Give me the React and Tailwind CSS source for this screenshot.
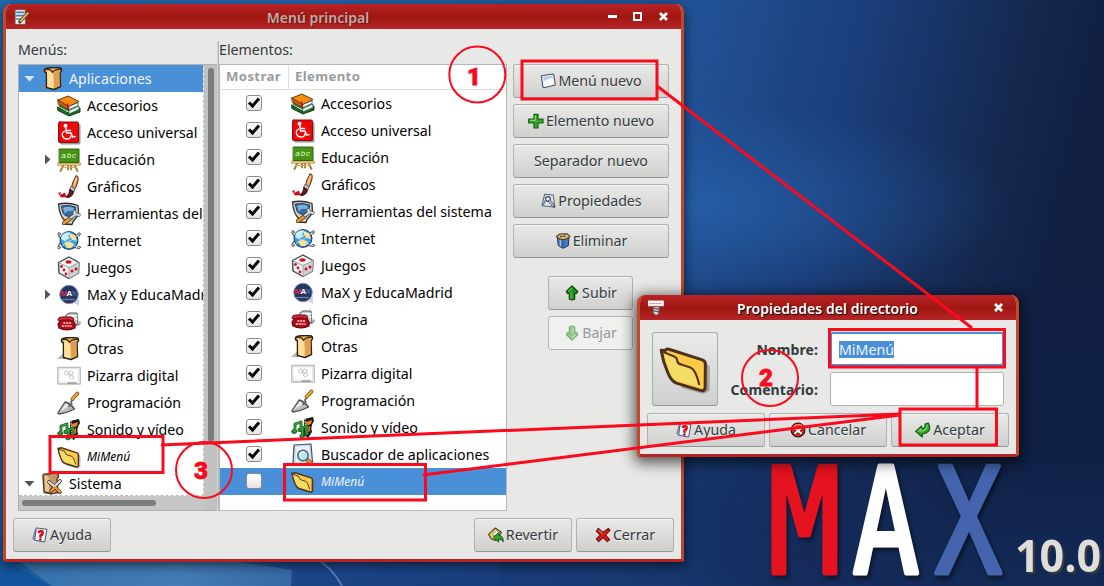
import React from "react";

const RED = "#fb0a1e";

function Svg({ size = 24, children, className = "" }) {
  return (
    <svg width={size} height={size} viewBox="0 0 24 24" className={`shrink-0 ${className}`} strokeLinejoin="round" strokeLinecap="round">
      {children}
    </svg>
  );
}

const Box = () => (
  <Svg>
    <path d="M0 22 L8 15 V22 Z" fill="#8b8b86" opacity="0.65" />
    <path d="M6.500 6 C3.500 5 4 2 6 1.500 Q13 -0.200 20.500 1 Q22.800 3 20 6 L20.500 19.500 L14 22.500 L6.500 20.500 Z" fill="#f0b55e" stroke="#2c2013" strokeWidth="1.500" />
    <path d="M7 5 Q10 2.500 12 5 L13.500 6.500 V21.500 L7.300 19.800 Z" fill="#ffdf9c" />
    <path d="M13.500 7 Q14 4 19.500 4 L19.800 19 L14.500 21.500 Z" fill="#dc9e50" />
    <path d="M5.500 2.700 Q10 1 12.500 5.500 Q15 2 20.500 2.500" fill="none" stroke="#3f2a13" strokeWidth="1.200" />
  </Svg>
);
const Books = () => (
  <Svg>
    <path d="M1 13 L11 19 L23 14 V18 L12 22 L1 16.500 Z" fill="#1b6b25" stroke="#123c17" />
    <path d="M12 16.500 L22 12 V15.500 L12 20 Z" fill="#f2f6f2" stroke="#19572a" strokeWidth="0.800" />
    <path d="M2 9 L12 14.500 V18 L2 12.500 Z" fill="#168b2f" />
    <path d="M1 6 L11 2 L22 7.500 L12 12.500 Z" fill="#fb8b10" stroke="#5b3510" />
    <path d="M1 6 L12 12.500 V16 L1.500 10.500 Z" fill="#c75a13" stroke="#5b3510" strokeWidth="0.800" />
    <path d="M12 12.500 L21 8.500 V11.500 L12 15.500 Z" fill="#fff" stroke="#31413a" strokeWidth="0.800" />
    <path d="M10.700 10 V15" stroke="#d50d1c" strokeWidth="1.400" />
  </Svg>
);
const Access = () => (
  <Svg>
    <rect x="3" y="3" width="20.500" height="20.500" rx="1.500" fill="#777" opacity="0.750" />
    <rect x="1.500" y="1" width="20" height="20.500" rx="1.300" fill="#ef0707" stroke="#8a1010" />
    <circle cx="8.500" cy="4.700" r="2" fill="#fff" />
    <path d="M9 7 L9.500 12 H14 L15.500 16 L18 15.500 M10 9.500 H13.500" fill="none" stroke="#fff" strokeWidth="1.600" />
    <path d="M7.500 10 C3.500 12.500 5.500 18 10 18 C12.500 18 14 16.500 14 14.500" fill="none" stroke="#fff" strokeWidth="1.300" />
  </Svg>
);
const Board = () => (
  <Svg>
    <path d="M7 16 L3.500 23 M17 16 L20.500 23 M11 16 V21.500 M14 16 V21.500" stroke="#b27b2e" strokeWidth="1.900" />
    <rect x="0.500" y="15" width="23" height="2.300" fill="#f0ca85" stroke="#a77832" strokeWidth="0.600" />
    <path d="M5 19.500 H19" stroke="#dca951" />
    <rect x="2.500" y="1" width="19.500" height="13.500" fill="#469413" stroke="#2a6413" strokeWidth="1" />
    <text x="4.200" y="10" fontSize="8" fontStyle="italic" fill="#e9ffd6" fontFamily="Liberation Sans, sans-serif" letterSpacing="1">abc</text>
  </Svg>
);
const Brush = () => (
  <Svg>
    <path d="M1 18 L4 17 L3 20 L8 17.500 L9 21 L13 18 L12 22 L4 22.500 Z" fill="#c60d22" />
    <path d="M19 1 Q22 0 21 6 Q19.500 12 17.500 14.500 L14.500 12.500 Q15.500 6 19 1 Z" fill="#e6a15e" stroke="#5a3016" />
    <path d="M14.200 11.500 L18 14 L16.800 17 L13 15 Z" fill="#c9d2d5" stroke="#454a4c" strokeWidth="0.800" />
    <path d="M13 14.500 L16.500 16.500 Q16 22.500 9.500 22.500 Q12 20 13 14.500 Z" fill="#5c1c1b" stroke="#401213" />
    <path d="M19.500 3 L17 10" stroke="#ffdca5" />
  </Svg>
);
const Tools = () => (
  <Svg>
    <path d="M1.500 2 Q11 0 21 3.500 L21.500 13 L16 19.500 L15 22.500 L6 22 L7.500 18 Q2.500 14 1.500 2 Z" fill="#d8d3c4" stroke="#302e2b" strokeWidth="1.300" />
    <path d="M4.500 4 Q12 2.500 18.500 5 L18 12 Q11 17 6.500 12 Z" fill="#346ca7" stroke="#223e64" />
    <path d="M6 6 Q11 3.500 17 6 L16 9 Q9 8 8 12 Z" fill="#79b1dc" />
    <path d="M7 21 L14 16" stroke="#603b15" strokeWidth="4" />
    <path d="M7 21 L14 16" stroke="#ef9e36" strokeWidth="2.700" />
    <path d="M14 15.500 L19 12 M17.500 9.500 V12 L22 13" stroke="#4d5556" strokeWidth="3.400" fill="none" />
    <path d="M14 15.500 L19 12 M17.500 9.500 V12 L22 13" stroke="#d7dedf" strokeWidth="2.100" fill="none" />
  </Svg>
);
const Globe = () => (
  <Svg>
    <path d="M2 19 Q-1 14 12 10 Q23 3 22 7 M2 4 Q-1 8 11 14 Q22 22 23 18" fill="none" stroke="#5d6264" strokeWidth="1.200" />
    <circle cx="12" cy="11.500" r="8.800" fill="#40a4df" stroke="#1b4a72" strokeWidth="1.300" />
    <path d="M5 6 Q9 2 14 4 L11 7 L13 9 L8 12 L4 10 Z" fill="#c7edf8" />
    <path d="M13 4.500 L18 6 L20 12 L16 11 L13 8 Z M7 14 L13 13 L17 15 L14 19 L10 19 Z" fill="#ffe18b" />
    <path d="M3 5 Q3 9 10 13 Q17 17 21 19 M4 18 Q7 14 13 12 Q20 9 21 5" fill="none" stroke="#e3e6e6" strokeWidth="0.700" />
    <circle cx="2" cy="5" r="1.300" fill="#fff" stroke="#444" strokeWidth="0.800" />
    <circle cx="22" cy="5" r="1.300" fill="#fff" stroke="#444" strokeWidth="0.800" />
    <circle cx="2" cy="18.500" r="1.300" fill="#fff" stroke="#444" strokeWidth="0.800" />
    <circle cx="22" cy="18.500" r="1.300" fill="#fff" stroke="#444" strokeWidth="0.800" />
  </Svg>
);
const Dice = () => (
  <Svg>
    <path d="M12 1 L22 6.500 L21.500 17 L12 22.500 L2 17 L1.500 6.500 Z" fill="#f2f4f4" stroke="#3b484d" strokeWidth="1.400" />
    <path d="M12 11.500 L22 6.500 L21.500 17 L12 22.500 Z" fill="#ccd2d5" />
    <path d="M2 6.800 L12 11.500 V22 M12 11.500 L21.500 6.800" stroke="#99a5aa" fill="none" />
    <ellipse cx="11.500" cy="6" rx="3" ry="1.700" fill="#d30f15" />
    <g fill="#d30f15"><circle cx="4.500" cy="10.500" r="1.400" /><circle cx="7" cy="14" r="1.400" /><circle cx="9" cy="18" r="1.400" /><circle cx="15" cy="15" r="1.500" /><circle cx="19" cy="13" r="1.500" /></g>
  </Svg>
);
const Max = () => (
  <Svg>
    <path d="M15 19 L22 23 V15 Z" fill="#ccd4e3" />
    <circle cx="12" cy="11.500" r="9.300" fill="#25355f" stroke="#8290ae" strokeWidth="0.900" />
    <g fontFamily="Liberation Sans, sans-serif" fontSize="8" fontWeight="bold"><text x="3.500" y="13" fill="#de2943">M</text><text x="9.400" y="13" fill="#fff">A</text><text x="14.500" y="13" fill="#496caf">X</text></g>
    <path d="M6 16.500 H18" stroke="#7687aa" strokeWidth="1.500" strokeDasharray="1 1.500" />
  </Svg>
);
const Phone = () => (
  <Svg>
    <path d="M9 5 L12 3 H20 L21 14 L17 17 L9 13 Z" fill="#c9cdcd" stroke="#53595a" />
    <path d="M11 6 H20 M11 9 H20" stroke="#fff" strokeWidth="1.300" />
    <path d="M18 15 Q24 16 23 12" fill="none" stroke="#555" />
    <path d="M1 14 L5 8 H15 L18 14 V18 Q10 22 2 18 Z" fill="#b80b18" stroke="#4d0a0f" strokeWidth="1.100" />
    <path d="M1 10 Q1 7 5 7 H14 Q17 8 17 10 Q15 12 13 10 H5 Q2 12 1 10" fill="#ea2b35" stroke="#5c0b10" />
    <path d="M7 13 H14 M5.500 16 H14" stroke="#ffe8e4" strokeWidth="1.500" strokeDasharray="0.800 2" />
  </Svg>
);
const Screen = () => (
  <Svg>
    <rect x="0.800" y="3.500" width="22.500" height="16.500" fill="#f9faf9" stroke="#b9bcba" strokeWidth="1.300" />
    <rect x="2.500" y="5" width="19" height="13" fill="#fff" stroke="#d9dbda" strokeWidth="0.600" />
    <g fill="none" stroke="#b5b5b5" strokeWidth="0.700"><circle cx="9.500" cy="9" r="2" /><circle cx="14" cy="9" r="2" /><circle cx="14.500" cy="13" r="2" /><path d="M11 10 L13 12.500" /></g>
    <path d="M11 19 H19" stroke="#777" strokeWidth="1.200" />
  </Svg>
);
const Trowel = () => (
  <Svg>
    <path d="M0.800 22 L8 11 Q13 12 17.500 18 Q10 22 2 23 Z" fill="#bdbdbf" stroke="#4e4e52" strokeWidth="1.300" />
    <path d="M3 20.500 L9 12.500 L12 15 Z" fill="#eeeef0" />
    <path d="M12 15 Q16 15 14 11 L16 8.500" fill="none" stroke="#64686b" strokeWidth="1.800" />
    <path d="M15.500 8 L20.500 2.500" stroke="#6d4510" strokeWidth="3.600" />
    <path d="M15.500 8 L20.500 2.500" stroke="#efa71d" strokeWidth="2.400" />
  </Svg>
);
const Media = () => (
  <Svg>
    <path d="M13 3 L22 1 L23 5 Q19 11 21 16 L17 22 L13 20 Z" fill="#1e1914" />
    <path d="M15 6 L21 4 L20 8 L15 10 Z M15 12 L19 10 L19 15 L15 18 Z" fill="#f27f22" />
    <path d="M14 3 L15 21" stroke="#fff" strokeDasharray="1 1.500" />
    <path d="M4 15 V8 L10 6 V13 M11.500 19 V12 L16 10 V17" fill="none" stroke="#0d501b" strokeWidth="2.800" />
    <g fill="#26992d" stroke="#0d501b" strokeWidth="0.900"><ellipse cx="3.200" cy="15.500" rx="2.500" ry="2" /><ellipse cx="9" cy="14" rx="2.200" ry="1.800" /><ellipse cx="11" cy="20" rx="2.200" ry="1.800" /><ellipse cx="15.500" cy="17.500" rx="2" ry="1.700" /></g>
    <path d="M4 15 V8 L10 6 V13 M11.500 19 V12 L16 10 V16" fill="none" stroke="#36aa38" strokeWidth="1.400" />
  </Svg>
);
const Folder = ({ size = 24 }) => (
  <Svg size={size}>
    <path d="M10 20.500 L20.500 23.500 L23.300 22 L23.500 11 L21 8.500 Z" fill="#6b6b6b" opacity="0.500" />
    <path d="M1 3.300 L2.800 3.500 Q3.500 2.400 5 3 L20 7.800 Q21.500 8.300 21.400 10 L21.300 20.800 Q21 22.300 19.500 22 L8 18.500 Q5.500 17.500 4 13.500 Q1.800 8.500 1 3.300 Z" fill="#ffca44" stroke="#4d311d" strokeWidth="1.400" />
    <path d="M2 4.200 L7 6.200 Q8.400 6.800 8.400 8.200 Q8.600 9.700 10.500 10 L14.500 11.300 Q17 12.300 19 20.500 L8 17.300 Q6 16.500 4.700 13 Q3 8.500 2 4.200 Z" fill="#f5dc67" />
    <path d="M2 4.200 L7 6.200 Q8.400 6.800 8.400 8.200 Q8.600 9.700 10.500 10 L14.500 11.300 Q17 12.300 18.500 19" fill="none" stroke="#56381f" strokeWidth="1" />
  </Svg>
);
const Finder = () => (
  <Svg>
    <path d="M3 2 L20 1 L21.500 19 L5 22 L2 20 Z" fill="#cedeed" stroke="#44505f" strokeWidth="1.200" />
    <path d="M5 4 L18 3 L19 17 L5 19 Z" fill="#eaf2f9" />
    <path d="M16 16 L20 20.500" stroke="#6e4410" strokeWidth="3.600" /><path d="M16.500 16.500 L20 20.500" stroke="#f3951c" strokeWidth="2.300" />
    <circle cx="12" cy="12.500" r="5.200" fill="#b9e8f7" stroke="#476076" strokeWidth="1.500" />
    <path d="M9 12 Q9 9.500 12 9" fill="none" stroke="#fff" strokeWidth="1.500" />
  </Svg>
);
const SystemBox = () => (
  <Svg>
    <path d="M0 22 H21 V20 Z" fill="#999" />
    <path d="M3 5 Q2 1 7 2 L17 1 Q20 4 17 7 L18 20 L12 22 L4 20 Z" fill="#c49661" stroke="#483320" strokeWidth="1.300" />
    <path d="M5 4 Q8 3 9 7 V20 L5 19 Z" fill="#e7c697" />
    <path d="M9 10 L20 20 M20 9 L11 19" stroke="#3b342d" strokeWidth="3.700" />
    <path d="M9 10 L15 15 M20 9 L15 14" stroke="#dee3e4" strokeWidth="2.200" />
    <path d="M15.500 15.500 L20 20 M15 15 L11 19" stroke="#ed982e" strokeWidth="2.400" />
  </Svg>
);

const Paper = () => (
  <Svg size={16}>
    <path d="M2 4 L19 1.500 Q21 1.500 21 4 L23 18 L6 22 Q4 22 4 19 Z" fill="#e7eff8" stroke="#46546b" strokeWidth="1.600" />
    <path d="M5 5.500 L19 4 V8 Q14 6 6 12 Z" fill="#bdcce0" /><path d="M6 14 Q13 8 20 9 L21 17 L7 20 Z" fill="#fff" />
  </Svg>
);
const Plus = () => (
  <Svg size={16}><path d="M9 2 H15 V9 H22.500 V15 H15 V22.500 H9 V15 H1 V9 H9 Z" fill="#38a727" stroke="#145e12" strokeWidth="1.800" /><path d="M11 4 V11 H4" fill="none" stroke="#9be07f" strokeWidth="1.500" /></Svg>
);
const Props = () => (
  <Svg size={16}><path d="M7 2 L20 3 L22 21 L3 19 Z" fill="#dfe6ef" stroke="#53627b" strokeWidth="1.600" /><circle cx="12" cy="9" r="3.500" fill="#fff" stroke="#39434e" strokeWidth="1.800" /><path d="M14 12 L21 20" stroke="#444d55" strokeWidth="4" /><path d="M14 12 L20 19" stroke="#d4dce0" strokeWidth="1.800" /><path d="M5 18 L8 11" stroke="#5c7eaa" strokeWidth="2" /></Svg>
);
const Trash = () => (
  <Svg size={16}><path d="M3.500 7 L5 19 L12 23 L20 19 L21 7 Z" fill="#4b76b5" stroke="#20375d" strokeWidth="1.500" /><path d="M8 11 V19" stroke="#9dbbe2" strokeWidth="2" /><path d="M12 12 V21.500" stroke="#2c4d82" strokeWidth="1.500" /><path d="M2 5 L7 1.500 L18 1 L22.500 5 L18 8.500 L12 10 L6 8.500 Z" fill="#e0bd70" stroke="#413822" strokeWidth="1.600" /><path d="M8 5.500 L16 4.500" stroke="#423b24" strokeWidth="2" strokeDasharray="2 3" /></Svg>
);
const Up = () => (
  <Svg size={16}><path d="M12 1.500 L20.500 9.500 L19 12.500 H16 V21 Q12 24 8 21 V12.500 H5 L3.500 9.500 Z" fill="#18931c" stroke="#083f0b" strokeWidth="1.800" /><path d="M7 9 L12 4.500 M10.500 11 V20" stroke="#66c555" strokeWidth="1.700" /></Svg>
);
const Down = () => (
  <Svg size={16} className="rotate-180 opacity-50"><path d="M12 1.500 L20.500 9.500 L19 12.500 H16 V21 Q12 24 8 21 V12.500 H5 L3.500 9.500 Z" fill="#31a62a" stroke="#166319" strokeWidth="1.800" /><path d="M7 9 L12 4.500 M10.500 11 V20" stroke="#93d883" strokeWidth="1.700" /></Svg>
);
const Help = () => (
  <Svg size={16}><path d="M1.500 17 L5 4 L9 4 V20 Z" fill="#b9c6d8" stroke="#61728d" strokeWidth="1.500" /><path d="M7 1.500 L22.500 3.500 L19 22.500 L4.500 20 Z" fill="#edf2f8" stroke="#485875" strokeWidth="1.500" /><path d="M10.500 7 Q16.500 4.500 16 9 Q15.500 12 12.800 12.500 V14.500" fill="none" stroke="#e10f17" strokeWidth="4" /><circle cx="12.500" cy="18.800" r="1.900" fill="#a5121a" /></Svg>
);
const Revert = () => (
  <Svg size={16}><path d="M1 11 L11 1.500 L20 8 L12 20 L5 18 Z" fill="#ecd477" stroke="#544315" strokeWidth="1.800" /><path d="M7 11 L13 5 L18 9 L13 14 Z" fill="#e2eef9" stroke="#8c7841" /><path d="M8 15.500 L16 8.500 V12 Q23 13 23 22 Q20 18 16 18 V22 Z" fill="#35a52a" stroke="#17591a" strokeWidth="1.500" /></Svg>
);
const Close = () => (
  <Svg size={16}><path d="M5 2 L12 8 L20 2 L22.500 5 L16 12 L22 19 L18.500 22 L12 16 L5.500 22 L2 18 L8 12 L2 6 Z" fill="#d91717" stroke="#711111" strokeWidth="1.600" /><path d="M5 4.500 L11 10" stroke="#ff8c7b" strokeWidth="1.500" /></Svg>
);
const Cancel = () => (
  <Svg size={16}><circle cx="12" cy="12" r="10.300" fill="#e0261b" stroke="#38110e" strokeWidth="1.800" /><path d="M5 7 Q11 2 18 5" stroke="#f98a65" strokeWidth="2" fill="none" /><path d="M7.500 9.500 L16.500 17 M16.500 9.500 L7.500 17" stroke="#4a100e" strokeWidth="4.800" /><path d="M7.500 9.500 L16.500 17 M16.500 9.500 L7.500 17" stroke="#fff" strokeWidth="3" /></Svg>
);
const Enter = () => (
  <Svg size={16}><path d="M1 14 L10 6 V10.500 Q16 9 15 3 L20 1.500 Q27 15 11 18 V22.500 Z" fill="#29a829" stroke="#115516" strokeWidth="1.700" /><path d="M5 14 L9 10 V14 Q17 13 18.500 5" fill="none" stroke="#8ed873" strokeWidth="1.600" /></Svg>
);

const categories = [
  ["Accesorios", Books], ["Acceso universal", Access], ["Educación", Board], ["Gráficos", Brush],
  ["Herramientas del sistema", Tools], ["Internet", Globe], ["Juegos", Dice], ["MaX y EducaMadrid", Max],
  ["Oficina", Phone], ["Otras", Box], ["Pizarra digital", Screen], ["Programación", Trowel], ["Sonido y vídeo", Media],
];

function Button({ icon: Icon, children, className = "", disabled = false }) {
  return (
    <div className={`flex h-[34px] shrink-0 items-center justify-center gap-[2px] rounded-[3px] border text-[14.200px] leading-none ${disabled ? "border-[#b4b4b2] bg-[#f0f0ef] text-[#999]" : "border-[#b1b1af] border-b-[#969694] bg-linear-to-b from-[#e9e9e7] to-[#d0d0ce] text-[#333b3e] [text-shadow:0_1px_0_#f4f4f4] shadow-[inset_0_1px_0_#f4f4f2]"} ${className}`}>
      {Icon && <Icon />}
      <span className="whitespace-nowrap">{children}</span>
    </div>
  );
}

function Arrow({ open, className }) {
  return (
    <svg width="11" height="11" viewBox="0 0 11 11" className={`shrink-0 ${className}`}>
      <path d={open ? "M0.500 3 H10.500 L5.500 8.500 Z" : "M3 0.500 V10.500 L8.500 5.500 Z"} fill="currentColor" />
    </svg>
  );
}

function Branch({ label, icon: Icon, expandable }) {
  return (
    <div className="flex h-[27px] shrink-0 items-center pl-[23px]">
      <span className="flex w-[15px] shrink-0">{expandable && <Arrow className="text-[#555]" />}</span>
      <Icon />
      <span className="ml-[6px] whitespace-nowrap">{label}</span>
    </div>
  );
}

function Check({ on }) {
  return (
    <span className="mb-px flex size-4 items-center justify-center rounded-[3px] border border-[#8b8b8a] bg-linear-to-b from-white to-[#e4e4e3]">
      {on && <svg width="14" height="14" viewBox="0 0 14 14"><path d="M2 6.500 L5.500 10 L12 2.500" fill="none" stroke="#080808" strokeWidth="3" /></svg>}
    </span>
  );
}

function ElementRow({ label, icon: Icon, selected }) {
  return (
    <div className={`flex h-[27px] shrink-0 items-center ${selected ? "bg-[#4a90d9] text-[#f0f4fa]" : ""}`}>
      <div className="flex w-[71px] pl-[26px]"><Check on={!selected} /></div>
      <Icon />
      <span className={`ml-[6px] whitespace-nowrap ${selected ? "text-[12px] italic" : ""}`}>{label}</span>
    </div>
  );
}

const X = () => (
  <svg width="11" height="11" viewBox="0 0 11 11"><path d="M2 2 L9 9 M9 2 L2 9" stroke="#fff" strokeWidth="2.800" /></svg>
);

function MainWindow() {
  return (
    <section className="absolute left-[3px] top-[4px] flex h-[558px] w-[681px] flex-col overflow-hidden rounded-t-[8px] rounded-b-[3px] border-x-[3px] border-b-[3px] border-x-[#c1482b] border-b-[#b72323] bg-[#e8e8e6] shadow-[0_3px_12px_#000000a0]">
      <header className="-mx-[3px] flex h-[25px] shrink-0 items-center bg-linear-to-b from-[#b92226] via-[#a01711] to-[#b52426] px-[11px]">
        <Svg size={16}>
          <path d="M2 1 H17 V23 H2 Z" fill="#f0f0eb" stroke="#665252" /><path d="M4 5 H15 M4 10 H15 M4 15 H11" stroke="#477fae" strokeWidth="2.500" /><path d="M9 19 L21 6" stroke="#40310f" strokeWidth="5" /><path d="M10 18 L21 6" stroke="#e2b052" strokeWidth="3" />
        </Svg>
        <h1 className="flex-1 pl-[2px] pr-[4px] pt-[2px] text-center text-[14px] font-semibold text-[#bcaba5] [text-shadow:1px_1px_0_#7b1712]">Menú principal</h1>
        <div className="flex items-center gap-[16px] pr-[4px]">
          <span className="h-[3px] w-[9px] bg-white" />
          <span className="size-[9px] border-2 border-white" />
          <X />
        </div>
      </header>
      <div className="flex h-[482px] shrink-0 pl-[12px] pr-[12px] text-[14.200px] text-black">
        <div className="flex w-[199px] flex-col">
          <h2 className="flex h-[35px] shrink-0 items-center pt-[7px] text-[#333b3e]">Menús:</h2>
          <div className="flex h-[447px] border border-r-0 border-[#b0b0ae]">
            <div className="flex w-[185px] flex-col">
              <div className="flex h-[431px] shrink-0 flex-col overflow-hidden border-r border-b border-dashed border-[#bebebe] bg-white">
                <div className="flex h-[27px] shrink-0 items-center bg-[#4a90d9] pl-[5px] text-[#f0f4fa]">
                  <Arrow open className="mr-[5px] text-[#d5e8fb]" /><Box /><span className="ml-[5px]">Aplicaciones</span>
                </div>
                {categories.map(([name, icon]) => <Branch key={name} label={name} icon={icon} expandable={name === "Educación" || name === "MaX y EducaMadrid"} />)}
                <div className="flex h-[27px] shrink-0 items-center pl-[38px]"><Folder /><span className="ml-[6px] text-[12px] italic">MiMenú</span></div>
                <div className="flex h-[27px] shrink-0 items-center pl-[5px]"><Arrow open className="mr-[5px] text-[#555]" /><SystemBox /><span className="ml-[5px]">Sistema</span></div>
              </div>
              <div className="flex flex-1 items-center bg-[#c5c6c5] pl-[3px]"><span className="h-[6px] w-[134px] rounded-full bg-[#797d7d]" /></div>
            </div>
            <div className="flex w-[13px] justify-center bg-[#c1c3c2] pt-[3px]"><span className="h-[374px] w-[6px] rounded-full bg-[#797d7d]" /></div>
          </div>
        </div>
        <div className="mt-[12px] h-[470px] w-[2px] border-r border-[#b7b7b4] bg-[#d2d3d1]" />
        <div className="flex w-[288px] flex-col">
          <h2 className="flex h-[35px] shrink-0 items-center pt-[7px] text-[#333b3e]">Elementos:</h2>
          <div className="flex h-[447px] flex-col border border-[#b7b7b4] bg-white">
            <div className="flex h-[25px] shrink-0 items-center border-b border-[#dededd] text-[13.200px] font-bold tracking-[0.35px] text-[#999b9c]">
              <span className="flex h-full w-[69px] items-center border-r border-[#dededd] pl-[6px]">Mostrar</span>
              <span className="pl-[6px]">Elemento</span>
            </div>
            {categories.map(([name, icon]) => <ElementRow key={name} label={name} icon={icon} />)}
            <ElementRow label="Buscador de aplicaciones" icon={Finder} />
            <ElementRow label="MiMenú" icon={Folder} selected />
          </div>
        </div>
        <div className="ml-[6px] mt-[35px] flex w-[156px] flex-col gap-[6px]">
          <Button icon={Paper}>Menú nuevo</Button>
          <Button icon={Plus}>Elemento nuevo</Button>
          <Button>Separador nuevo</Button>
          <Button icon={Props}>Propiedades</Button>
          <Button icon={Trash}>Eliminar</Button>
          <div className="mt-[12px] flex flex-col items-start gap-[6px] pl-[35px]">
            <Button icon={Up} className="w-[85px]">Subir</Button>
            <Button icon={Down} className="w-[85px]" disabled>Bajar</Button>
          </div>
        </div>
      </div>
      <footer className="flex items-center gap-[4px] pl-[7px] pr-[7px] pt-[7px]">
        <Button icon={Help} className="mr-auto w-[98px]">Ayuda</Button>
        <Button icon={Revert} className="w-[98px]">Revertir</Button>
        <Button icon={Close} className="w-[98px]">Cerrar</Button>
      </footer>
    </section>
  );
}

function Dialog() {
  return (
    <section className="absolute left-[637px] top-[295px] flex h-[162px] w-[382px] flex-col overflow-hidden rounded-t-[8px] rounded-b-[4px] border-x-[3px] border-b-[3px] border-x-[#c1482b] border-b-[#b72323] bg-[#e8e8e6] shadow-[0_3px_14px_3px_#000000a0]">
      <header className="-mx-[3px] flex h-[25px] shrink-0 items-center bg-linear-to-b from-[#b92226] via-[#a01711] to-[#b52426] px-[11px]">
        <Svg size={16}>
          <path d="M0 1 H24 V9 H0 Z" fill="#fff" stroke="#c8b5b2" /><path d="M3 5.500 H21" stroke="#b92a2a" strokeWidth="1.500" strokeDasharray="0.500 2.500" /><path d="M8 10 H17 L16 21 L12 23 L8 20 Z" fill="#d2d4d3" stroke="#554d4b" /><path d="M8 12 L17 14 M8 16 L17 18" stroke="#555" strokeWidth="1.700" />
        </Svg>
        <h1 className="flex-1 pt-[2px] pr-[2px] text-center text-[14px] font-semibold tracking-[0.050px] text-white [text-shadow:1px_1px_1px_#000]">Propiedades del directorio</h1>
        <span className="pr-[4px]"><X /></span>
      </header>
      <div className="flex h-[86px] shrink-0 pl-[12px] pr-[12px] pt-[12px]">
        <div className="flex h-[74px] w-[66px] shrink-0 items-center justify-center rounded-[3px] border border-[#aaa] border-b-[#969694] bg-linear-to-b from-[#eaeae8] to-[#d0d0ce]"><Folder size={52} /></div>
        <div className="flex w-[112px] flex-col gap-[6px] pr-[12px] text-right text-[14px] font-bold tracking-[0.100px] text-[#333b3e]">
          <label className="flex h-[34px] items-center justify-end pt-px">Nombre:</label>
          <label className="flex h-[34px] items-center justify-end pt-px">Comentario:</label>
        </div>
        <div className="flex flex-1 flex-col gap-[6px]">
          <div className="flex h-[34px] items-center rounded-[3px] border-2 border-[#4a90d9] bg-white pl-[7px] text-[14.200px]"><span className="bg-[#4a90d9] leading-[17px] text-[#f0f4fa]">MiMenú</span></div>
          <div className="h-[34px] rounded-[3px] border border-[#b1b1af] bg-white" />
        </div>
      </div>
      <footer className="flex gap-[4px] pl-[7px] pr-[7px] pt-[7px]">
        <Button icon={Help} className="w-[118px]">Ayuda</Button>
        <Button icon={Cancel} className="w-[118px]">Cancelar</Button>
        <Button icon={Enter} className="w-[118px]">Aceptar</Button>
      </footer>
    </section>
  );
}

function Wallpaper() {
  return (
    <svg width="1104" height="586" viewBox="0 0 1104 586" className="absolute inset-0">
      <defs>
        <linearGradient id="sky" x1="0" y1="0" x2="1" y2="0.120">
          <stop offset="0" stopColor="#1d6cae" /><stop offset="0.300" stopColor="#2564ab" /><stop offset="0.600" stopColor="#22559b" /><stop offset="0.780" stopColor="#1b3d7a" /><stop offset="0.920" stopColor="#15294f" /><stop offset="1" stopColor="#101f42" />
        </linearGradient>
        <radialGradient id="glow"><stop offset="0" stopColor="#2865ae" stopOpacity="0.650" /><stop offset="1" stopColor="#2460a8" stopOpacity="0" /></radialGradient>
        <linearGradient id="floor" x1="0" x2="1"><stop offset="0" stopColor="#17589b" /><stop offset="0.160" stopColor="#3974ac" /><stop offset="0.270" stopColor="#1b4387" /><stop offset="0.600" stopColor="#18386f" /><stop offset="0.720" stopColor="#152c5c" /><stop offset="1" stopColor="#132a54" /></linearGradient>
        <linearGradient id="night" x1="0" y1="0" x2="0" y2="1"><stop offset="0" stopColor="#10224a" stopOpacity="0" /><stop offset="1" stopColor="#10224a" stopOpacity="0.700" /></linearGradient>
        <linearGradient id="fade" x1="0" y1="0" x2="0" y2="1"><stop offset="0" stopColor="#fff" stopOpacity="0" /><stop offset="1" stopColor="#fff" /></linearGradient>
        <mask id="low"><rect y="440" width="1104" height="146" fill="url(#fade)" /></mask>
      </defs>
      <rect width="1104" height="586" fill="url(#sky)" />
      <ellipse cx="690" cy="205" rx="320" ry="100" fill="url(#glow)" />
      <rect x="500" y="240" width="604" height="346" fill="url(#night)" />
      <rect x="0" y="440" width="1104" height="146" fill="url(#floor)" mask="url(#low)" />
      <path d="M0 557 L50 586 H0 Z" fill="#12559c" />
      <path d="M20 562 H240 L292 570 L291 586 H52 Z" fill="#4d85b9" opacity="0.550" />
      <path d="M315 558 Q333 568 342 586" fill="none" stroke="#7d9cc4" strokeWidth="2" opacity="0.650" />
      <g fontFamily="'DejaVu Sans Mono', monospace" fontSize="146" strokeWidth="5" strokeLinejoin="round" className="[filter:drop-shadow(2px_3px_2px_#00000080)]">
        <text transform="translate(768.500 572.500) scale(0.820 1)" fill="#e5131f" stroke="#e5131f">M</text>
        <text transform="translate(852.500 572.500) scale(0.760 1)" fill="#fff" stroke="#fff">A</text>
        <text transform="translate(935 572.500) scale(0.760 1)" fill="#4465ad" stroke="#4465ad">X</text>
      </g>
      <text x="1015" y="572" textLength="86" lengthAdjust="spacingAndGlyphs" fontFamily="'Open Sans', 'Noto Sans', sans-serif" fontWeight="bold" fontSize="44" fill="#dededd" className="[filter:drop-shadow(2px_2px_0_#3a3a3a)]">10.0</text>
    </svg>
  );
}

function Annotations() {
  return (
    <svg width="1104" height="586" viewBox="0 0 1104 586" className="absolute inset-0">
      <g fill="none" stroke={RED} strokeWidth="3">
        <rect x="522" y="61" width="135" height="38" />
        <rect x="829.500" y="329.500" width="175" height="37.500" />
        <rect x="900" y="409" width="96.500" height="36" />
        <rect x="50" y="436.500" width="113" height="36" />
        <rect x="284.500" y="464.500" width="141" height="35.500" />
        <path d="M657 86 L972 328 M977 368 V409 M161 445 L900 414 M423 475 L900 415" />
        <g strokeWidth="2"><circle cx="477.300" cy="74.500" r="28" /><circle cx="770" cy="378" r="28" /><circle cx="204" cy="470" r="28" /></g>
      </g>
      <g fill={RED} stroke={RED} strokeWidth="0.800" fontFamily="Roboto, 'Liberation Sans', sans-serif" fontWeight="900" fontSize="24" textAnchor="middle">
        <text x="474" y="85">1</text><text x="766" y="386">2</text><text x="201" y="479">3</text>
      </g>
    </svg>
  );
}

export default function App() {
  return (
    <main className="relative h-[586px] w-[1104px] overflow-hidden bg-[#17366c] [font-family:'Noto_Sans','Open_Sans',sans-serif]">
      <Wallpaper />
      <MainWindow />
      <Dialog />
      <Annotations />
    </main>
  );
}
